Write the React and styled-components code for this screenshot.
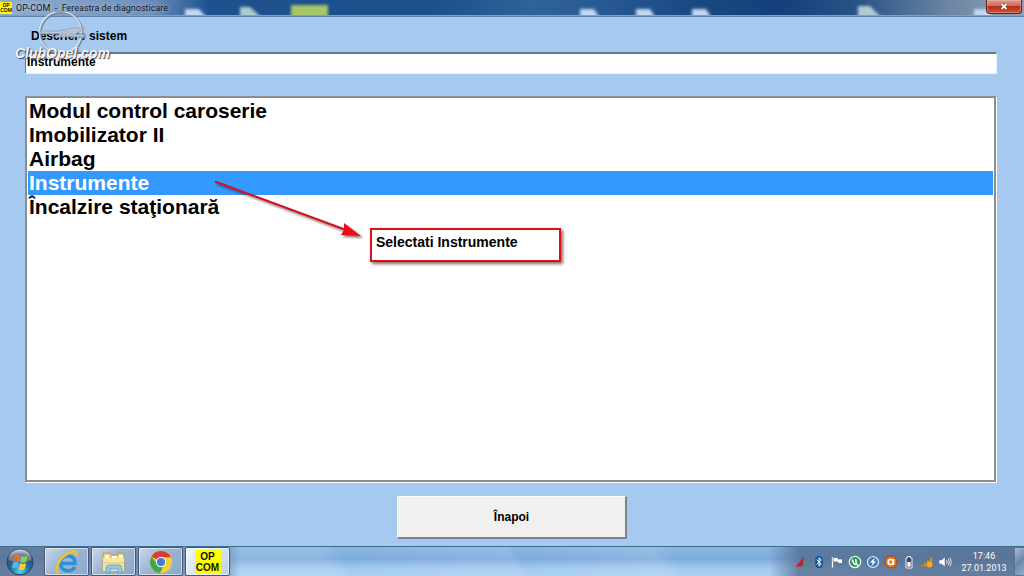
import React, { useState } from 'react'
import styled, { createGlobalStyle } from 'styled-components';


const GlobalStyle = createGlobalStyle`
* {
  box-sizing: border-box;
}
body {
  margin: 0;
  font-family: "Liberation Sans", Arial, sans-serif;
  color: #000;
}
button {
  font-family: inherit;
  cursor: pointer;
}
`;

const Desktop = styled.div`
display: flex;
flex-direction: column;
min-height: 100vh;
background-color: #a6c9ef;
`;

const TitleBar = styled.header`
position: relative;
display: flex;
align-items: center;
height: 17px;
overflow: hidden;
border-bottom: 1px solid #5e7fa6;
box-shadow: inset 0 -1px 0 #7f9fc4;
background:
  linear-gradient(90deg, rgba(150, 178, 212, 0.95) 0, rgba(118, 150, 192, 0.9) 150px, rgba(60, 104, 160, 0) 210px),
  linear-gradient(90deg, #1f5290 0%, #1c4f8c 42%, #2f6397 52%, #2a5b94 58%, #1a4a83 67%, #13407a 76%, #2a5487 84%, #6f88a5 93%, #8f9fb3 100%);
`;

const TitleGlow = styled.svg`
position: absolute;
left: 0;
top: 0;
width: 100%;
height: 15px;
`;

const AppIcon = styled.span`
position: relative;
display: flex;
flex-direction: column;
align-items: center;
justify-content: center;
width: ${(props) => (props.$large ? "26px" : "12px")};
height: ${(props) => (props.$large ? "24px" : "12px")};
background-color: #ffff00;
color: #111;
font-size: ${(props) => (props.$large ? "10px" : "5px")};
line-height: ${(props) => (props.$large ? "11px" : "5px")};
font-weight: bold;
`;

const TitleText = styled.h1`
position: relative;
flex: 1;
margin: 0 0 0 4px;
font-family: Roboto, "Noto Sans", sans-serif;
font-size: 9px;
font-weight: normal;
line-height: 14px;
white-space: pre;
color: #10151c;
text-shadow: 0 0 4px rgba(255, 255, 255, 0.6);
`;

const CloseButton = styled.button`
position: relative;
display: flex;
align-items: center;
justify-content: center;
align-self: flex-start;
width: 36px;
height: 14px;
margin-right: 2px;
padding: 0;
border: 1px solid #5b2320;
border-top: none;
border-radius: 0 0 4px 4px;
background: linear-gradient(#dc9a8c 0%, #cf6a59 45%, #b52f1b 50%, #cc5236 100%);
box-shadow: inset 0 0 0 1px rgba(255, 200, 190, 0.4);
`;

const Main = styled.main`
display: flex;
flex: 1;
flex-direction: column;
padding: 11px 27px 0 25px;
`;

const Label = styled.label`
padding-left: 6px;
font-size: 12px;
font-weight: bold;
line-height: 16px;
`;

const SystemInput = styled.input`
width: 100%;
height: 22px;
margin-top: 8px;
padding: 0 1px 3px;
border: 1px solid #e8f1fb;
border-top: 2px solid #69788c;
border-left-color: #69788c;
border-radius: 0;
outline: none;
background-color: #fff;
font-family: inherit;
font-size: 12px;
font-weight: bold;
color: #000;
`;

const ListBox = styled.div`
position: relative;
flex: 1;
margin: 22px 1px 0 0;
border: 2px solid #8a8d91;
background-color: #fff;
box-shadow: 1px 1px 0 #fff;
`;

const List = styled.ul`
margin: 0;
padding: 1px;
list-style: none;
`;

const ListItem = styled.button`
display: block;
width: 100%;
height: 24px;
padding: 0 1px;
border: none;
background-color: ${(props) => (props.$selected ? "#3399ff" : "transparent")};
color: ${(props) => (props.$selected ? "#fff" : "#000")};
font-size: 21px;
font-weight: bold;
line-height: 24px;
text-align: left;
`;

const Arrow = styled.svg`
position: absolute;
left: 183px;
top: 76px;
width: 160px;
height: 76px;
pointer-events: none;
`;

const Callout = styled.div`
position: absolute;
left: 343px;
top: 130px;
width: 191px;
height: 34px;
padding: 4px;
border: 2px solid #dd1019;
background-color: #fff;
box-shadow: 2px 2px 3px rgba(60, 0, 0, 0.6);
font-size: 14px;
font-weight: bold;
line-height: 16px;
white-space: nowrap;
`;

const ButtonBar = styled.div`
display: flex;
justify-content: center;
padding: 14px 0 7px;
`;

const BackButton = styled.button`
width: 230px;
height: 43px;
border: 1px solid #fff;
border-right: 2px solid #7b8490;
border-bottom: 2px solid #7b8490;
background-color: #f0f0f0;
color: #000;
font-size: 12px;
font-weight: bold;
`;

const Watermark = styled.div`
position: absolute;
left: 14px;
top: 12px;
width: 100px;
height: 50px;
pointer-events: none;
`;

const WatermarkText = styled.span`
position: absolute;
left: 1px;
top: 33px;
font-size: 14px;
font-weight: bold;
font-style: italic;
line-height: 16px;
color: #eef2f7;
text-shadow: 1px 1px 1px rgba(50, 60, 80, 0.9);
`;

const Taskbar = styled.footer`
display: flex;
align-items: stretch;
height: 30px;
border-top: 1px solid #3f6b8e;
background:
  linear-gradient(90deg, rgba(80, 104, 138, 0.8) 0, rgba(100, 130, 170, 0.65) 225px, rgba(100, 130, 170, 0) 240px),
  linear-gradient(270deg, rgba(80, 102, 134, 0.8) 0, rgba(80, 105, 140, 0.75) 225px, rgba(100, 130, 170, 0) 255px),
  linear-gradient(65deg, rgba(255, 255, 255, 0.12) 32%, rgba(255, 255, 255, 0) 34%, rgba(255, 255, 255, 0.1) 50%, rgba(255, 255, 255, 0) 51%, rgba(255, 255, 255, 0.12) 64%, rgba(255, 255, 255, 0) 66%),
  linear-gradient(#8bb6e2 0%, #7dabdc 40%, #a4cbf0 75%, #a9d0f3 100%);
`;

const StartButton = styled.button`
width: 44px;
padding: 1px 0 0 6px;
border: none;
background: none;
text-align: left;
`;

const TaskButton = styled.button`
display: flex;
align-items: center;
justify-content: center;
width: 45px;
height: 29px;
margin-right: 2px;
padding: 0;
border: 1px solid #44597a;
border-radius: 2px;
background: ${(props) => (props.$active
    ? "linear-gradient(135deg, #f0f6fc, #cfdff0 60%, #b8d0ea)"
    : "linear-gradient(135deg, #c9d8ea, #9db5d2 45%, #8ba8ca)")};
box-shadow: inset 0 0 0 1px rgba(255, 255, 255, 0.55);
`;

const Tray = styled.div`
display: flex;
align-items: center;
margin-left: auto;
`;

const TrayGroup = styled.div`
display: flex;
gap: 4px;
`;

const TrayIcon = styled.svg`
display: block;
width: 14px;
height: 14px;
`;

const Clock = styled.time`
width: 62px;
padding-left: 2px;
font-family: Roboto, "Noto Sans", sans-serif;
font-size: 9px;
line-height: 12px;
text-align: center;
color: #fff;
`;

const ShowDesktop = styled.button`
align-self: stretch;
width: 10px;
padding: 0;
border: 1px solid #5c7493;
border-right: none;
background: linear-gradient(135deg, #a9bdd6, #6d88ac 50%, #93adcb);
`;

const systems = [
    "Modul control caroserie",
    "Imobilizator II",
    "Airbag",
    "Instrumente",
    "Încalzire staţionară",
];

function StartOrb() {
    return (
        <svg width="28" height="28" viewBox="0 0 28 28">
            <defs>
                <radialGradient id="orb" cx="50%" cy="85%" r="80%">
                    <stop offset="0" stopColor="#5fd0f0" />
                    <stop offset="0.45" stopColor="#1f6f9f" />
                    <stop offset="0.8" stopColor="#31516f" />
                    <stop offset="1" stopColor="#a9bccd" />
                </radialGradient>
            </defs>
            <circle cx="14" cy="14" r="13" fill="url(#orb)" stroke="#2b4560" />
            <path d="M2.500 12a11.500 11 0 0 1 23 0Q14 16 2.500 12Z" fill="#fff" opacity="0.28" />
            <path d="M8.500 7.500q3-2 6 0l-1.300 6q-3-1.800-6 0Z" fill="#ee6a2c" />
            <path d="M15.500 8q3 1.800 6-.2l-1.300 6q-3 1.900-6 0Z" fill="#97cc45" />
            <path d="M7 14.600q3-1.800 6 0l-1.300 6q-3-1.900-6 0Z" fill="#5bb2f0" />
            <path d="M14 15q3 1.800 6 0l-1.300 6q-3 1.800-6 0Z" fill="#fdd03a" />
        </svg>
    )
}

function ExplorerIcon() {
    return (
        <svg width="26" height="26" viewBox="0 0 26 26">
            <path d="M6.500 14.500h14.500c.3-5-3-7.500-7-7.500-4.500 0-7.500 3-7.500 7.300s3 7.500 7.500 7.500c3.200 0 5.500-1.500 6.500-4" fill="none" stroke="#2a93d5" strokeWidth="3.600" />
            <path d="M5.500 13q1-6 8-7" fill="none" stroke="#7fd4f7" strokeWidth="1.400" />
            <path d="M4.500 23.500C-1 21 6.500 6.500 17 3c4-1.400 6.500-.3 5.500 3.500" fill="none" stroke="#f0c52c" strokeWidth="2.600" />
        </svg>
    )
}

function FolderIcon() {
    return (
        <svg width="28" height="26" viewBox="0 0 28 26">
            <path d="M3 4h7l1 2h7V4h6v18H3Z" fill="#e8cc74" stroke="#b99842" strokeWidth="0.8" />
            <path d="M5 6h4v3H5ZM12 7h5v3h-5ZM19 6h4v3h-4Z" fill="#fffbe8" />
            <path d="M3 9h21v13H3Z" fill="#f6e6a2" />
            <path d="M3 14h21" stroke="#e2c76f" />
            <path d="M6 24v-5q0-3 3-3h10q3 0 3 3v5h-4v-4h-8v4Z" fill="#8fc8ea" stroke="#5c9fc9" strokeWidth="0.8" />
        </svg>
    )
}

function ChromeIcon() {
    return (
        <svg width="24" height="24" viewBox="0 0 24 24">
            <circle cx="12" cy="12" r="11" fill="#f7d038" />
            <path d="M12 12 2.500 6.500A11 11 0 0 1 21.900 7.200H12Z" fill="#dc3c30" />
            <path d="M2.500 6.500A11 11 0 0 0 11 23l4.300-8.500L12 12l-4 2Z" fill="#3ea84b" />
            <circle cx="12" cy="12" r="5.200" fill="#f4f6f8" />
            <circle cx="12" cy="12" r="4" fill="#3f7fd2" />
        </svg>
    )
}

function TrayIcons() {
    return (
        <TrayGroup>
            <TrayIcon viewBox="0 0 14 14">
                <path d="M1.500 12 10 2l-1.500 9Z" fill="#d8142c" />
                <path d="m10.500 6 2.500 6-4-1Z" fill="#4a9b50" />
            </TrayIcon>
            <TrayIcon viewBox="0 0 14 14">
                <rect x="3.200" y="1" width="7.600" height="12" rx="3.700" fill="#14549a" />
                <path d="m4.700 4.700 4.600 4.300L7 11.200V2.800l2.300 2.200-4.600 4.300" fill="none" stroke="#fff" />
            </TrayIcon>
            <TrayIcon viewBox="0 0 14 14">
                <path d="M2.500 2v10.500" stroke="#fff" strokeWidth="1.300" />
                <path d="M3 2.500h5V4h4.500v4.500H8V7H3Z" fill="#fff" stroke="#4a5567" strokeWidth="0.600" />
            </TrayIcon>
            <TrayIcon viewBox="0 0 14 14">
                <circle cx="7" cy="7" r="5.700" fill="#279b51" stroke="#e8f5ec" strokeWidth="1.200" />
                <path d="M4.300 4.500 5.500 8q1 2 3 .8L7.600 4M8.500 8.800l1.500 1.700" fill="none" stroke="#fff" strokeWidth="1.600" />
            </TrayIcon>
            <TrayIcon viewBox="0 0 14 14">
                <circle cx="7" cy="7" r="5.500" fill="#3b7dc4" stroke="#e6effa" strokeWidth="1.200" />
                <path d="M9 2.500 4 7.500h2.700L5.300 11.500l4.700-5H7.500Z" fill="#fff" />
            </TrayIcon>
            <TrayIcon viewBox="0 0 14 14">
                <circle cx="7" cy="7" r="6" fill="#e57818" stroke="#a94312" />
                <circle cx="6.700" cy="7" r="2.500" fill="none" stroke="#fff" strokeWidth="1.600" />
                <path d="M9.500 4v6" stroke="#fff" strokeWidth="1.400" />
            </TrayIcon>
            <TrayIcon viewBox="0 0 14 14">
                <path d="M5.500 1.500h3v1.500H10v10H4V3h1.500Z" fill="#3e4a5a" stroke="#f2f5f8" />
                <path d="M5.300 7h3.400v4.700H5.300Z" fill="#fff" />
            </TrayIcon>
            <TrayIcon viewBox="0 0 14 14">
                <path d="M1 12V9.500h2V12ZM4 12V7.500h2V12ZM7 12V5h2v7ZM10 12V2h2v10Z" fill="#dfa02f" stroke="#85642c" strokeWidth="0.500" />
                <circle cx="9.500" cy="9.500" r="3" fill="#f4a92c" />
            </TrayIcon>
            <TrayIcon viewBox="0 0 14 14">
                <path d="M1 5h2.500L7 2v10L3.500 9H1Z" fill="#fff" stroke="#58667a" strokeWidth="0.500" />
                <path d="M8.500 5q1.200 2 0 4M10.300 3.800q2 3.200 0 6.400M12 2.500q2.600 4.500 0 9" fill="none" stroke="#e9eef5" strokeWidth="0.900" />
            </TrayIcon>
        </TrayGroup>
    )
}


function App() {

    const [selected, setSelected] = useState("Instrumente");

    return (
        <>
            <GlobalStyle />
            <Desktop>
                <TitleBar>
                    <TitleGlow viewBox="0 0 1024 15" preserveAspectRatio="none" aria-hidden="true">
                        <defs>
                            <filter id="soft" x="-20%" y="-50%" width="140%" height="200%">
                                <feGaussianBlur stdDeviation="1.500" />
                            </filter>
                        </defs>
                        <g filter="url(#soft)">
                            <path d="M185 20V9h14l10 11ZM580 20V9h14l7 11ZM636 20V9h14l7 11ZM692 20V9h14l7 11ZM974 20V9h14l7 11Z" fill="#c0d8f2" />
                            <path d="M240 20V7h10l14 13ZM858 20V6h12l14 14Z" fill="#afcbd0" />
                            <path d="M291 5h37v15h-37Z" fill="#a5c566" />
                        </g>
                    </TitleGlow>
                    <AppIcon><span>OP</span><span>COM</span></AppIcon>
                    <TitleText>{"OP-COM  -  Fereastra de diagnosticare"}</TitleText>
                    <CloseButton aria-label="Close">
                        <svg width="8" height="7" viewBox="0 0 8 7">
                            <path d="m1.500 1 5 5M6.500 1l-5 5" stroke="#5a2a28" strokeWidth="3" />
                            <path d="m1.500 1 5 5M6.500 1l-5 5" stroke="#fff" strokeWidth="1.800" />
                        </svg>
                    </CloseButton>
                </TitleBar>

                <Main>
                    <Label htmlFor="system">Descriere sistem</Label>
                    <SystemInput id="system" type="text" value={selected} readOnly />

                    <ListBox>
                        <List>
                            {systems.map((name) => (
                                <li key={name}>
                                    <ListItem $selected={name === selected} aria-pressed={name === selected} onClick={() => setSelected(name)}>
                                        {name}
                                    </ListItem>
                                </li>
                            ))}
                        </List>
                        <Arrow viewBox="0 0 160 76" aria-hidden="true">
                            <defs>
                                <filter id="shade" x="-10%" y="-10%" width="130%" height="130%">
                                    <feDropShadow dx="2" dy="2" stdDeviation="1.200" floodColor="#300" floodOpacity="0.550" />
                                </filter>
                            </defs>
                            <g filter="url(#shade)">
                                <path d="m6 8 130 48" stroke="#cf1220" strokeWidth="2.200" strokeLinecap="round" />
                                <path d="m151 62-20-1 3-5 0-7Z" fill="#e80c12" />
                            </g>
                        </Arrow>
                        <Callout>Selectati Instrumente</Callout>
                    </ListBox>
                </Main>

                <ButtonBar>
                    <BackButton>Înapoi</BackButton>
                </ButtonBar>

                <Taskbar>
                    <StartButton aria-label="Start"><StartOrb /></StartButton>
                    <TaskButton aria-label="Internet Explorer"><ExplorerIcon /></TaskButton>
                    <TaskButton aria-label="Explorer"><FolderIcon /></TaskButton>
                    <TaskButton aria-label="Chrome"><ChromeIcon /></TaskButton>
                    <TaskButton $active>
                        <AppIcon $large><span>OP</span><span>COM</span></AppIcon>
                    </TaskButton>
                    <Tray>
                        <TrayIcons />
                        <Clock>17:46<br />27.01.2013</Clock>
                        <ShowDesktop aria-label="Desktop" />
                    </Tray>
                </Taskbar>

                <Watermark>
                    <svg width="100" height="40" viewBox="0 0 100 40" aria-hidden="true">
                        <circle cx="47.500" cy="21.500" r="21" fill="none" stroke="#6f8097" strokeWidth="2.400" opacity="0.800" />
                        <circle cx="46.500" cy="20.500" r="21" fill="none" stroke="#e3eaf2" strokeWidth="1.500" opacity="0.850" />
                        <path d="M26 19h20l12-3h13l-9 6h9v3H40l6-3H26Z" fill="#b9c4d1" stroke="#7f8ea1" strokeWidth="0.600" opacity="0.900" />
                    </svg>
                    <WatermarkText>ClubOpel.com</WatermarkText>
                </Watermark>
            </Desktop>
        </>
    )
}

export default App
